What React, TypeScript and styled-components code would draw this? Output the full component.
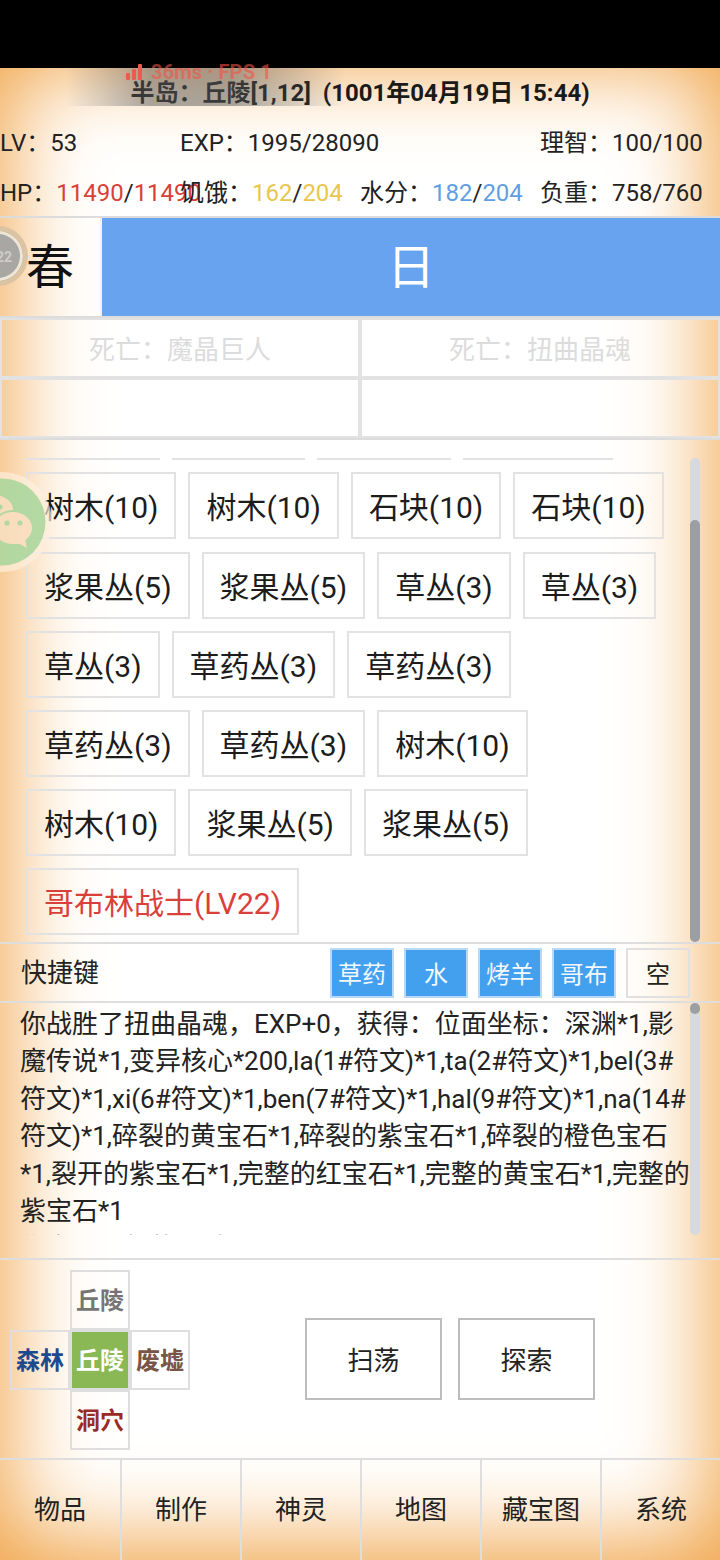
import React from "react";
import styled, { createGlobalStyle } from "styled-components";

const GlobalStyle = createGlobalStyle`
  html, body {
    margin: 0;
    padding: 0;
    background: #000;
  }
  * {
    box-sizing: border-box;
  }
`;

const Page = styled.div`
  position: relative;
  width: 720px;
  height: 1560px;
  overflow: hidden;
  background: #000;
  font-family: Roboto, "Noto Sans CJK SC", sans-serif;
  color: #1a1a1a;
`;

const StatusBar = styled.div`
  height: 68px;
  background: #000;
`;

const Game = styled.div`
  height: 1492px;
  background: #fff;
  box-shadow: inset 0 -10px 92px 6px #f0a040;
  display: flex;
  flex-direction: column;
`;

const Title = styled.div`
  height: 48px;
  font-size: 24px;
  font-weight: 700;
  line-height: 50px;
  text-align: center;
  white-space: pre;
`;

const Stats = styled.div`
  display: grid;
  grid-template-columns: repeat(4, 180px);
  grid-auto-rows: 50px;
  height: 100px;
  font-size: 24px;
  line-height: 54px;
  color: #222;
  white-space: nowrap;
`;

const Stat = styled.div<{ $span?: number }>`
  grid-column: span ${p => p.$span || 1};
  min-width: 0;
`;

const Num = styled.span<{ $color: string }>`
  color: ${p => p.$color};
`;

const SeasonRow = styled.div`
  display: flex;
  height: 102px;
  border-top: 2px solid #dcdcdc;
  border-bottom: 2px solid #dcdcdc;
`;

const Season = styled.div`
  width: 102px;
  padding-left: 26px;
  border-right: 2px solid #f2f2f2;
  color: #111;
`;

const DayPart = styled.div`
  flex: 1;
  background: #68a3ef;
  color: #fff;
  text-align: center;
`;

// the game cuts these two glyphs off at the foot of their box
const SeasonGlyph = styled.span`
  display: block;
  height: 70px;
  overflow: hidden;
  font-size: 48px;
  line-height: 100px;
`;

const EventGrid = styled.div`
  display: grid;
  grid-template-columns: 1fr 1fr;
  grid-auto-rows: 60px;
  height: 122px;
  border-bottom: 2px solid #dcdcdc;
`;

const EventCell = styled.div`
  border: 2px solid #e2e2e2;
  font-size: 26px;
  line-height: 60px;
  text-align: center;
  color: #dcdcdc;
`;

const ScrollArea = styled.div`
  position: relative;
  height: 502px;
  padding: 18px 56px 0 26px;
`;

const ScrollClip = styled.div`
  height: 484px;
  overflow: hidden;
`;

const ButtonRows = styled.div`
  display: flex;
  flex-direction: column;
  gap: 12.2px;
  margin-top: -64.8px;
`;

const ButtonRow = styled.div`
  display: flex;
  gap: 12px;
`;

const ResourceButton = styled.div<{ $enemy?: boolean }>`
  height: 67px;
  padding: 0 16px;
  border: 2px solid #e2e2e2;
  font-size: 30px;
  line-height: 68px;
  white-space: nowrap;
  color: ${p => (p.$enemy ? "#d9403a" : "#1c1c1c")};
`;

const Scrollbar = styled.div<{ $top: number; $bottom: number }>`
  position: absolute;
  top: ${p => p.$top}px;
  bottom: ${p => p.$bottom}px;
  right: 20px;
  width: 10px;
  border-radius: 5px;
  background: #d6d9de;
`;

const Thumb = styled.div<{ $top: number; $height: number }>`
  position: absolute;
  left: 0;
  right: 0;
  top: ${p => p.$top}px;
  height: ${p => p.$height}px;
  border-radius: 5px;
  background: #9b9ea3;
`;

const ShortcutRow = styled.div`
  display: flex;
  align-items: center;
  gap: 10px;
  height: 61px;
  padding: 0 30px 0 21px;
  border-top: 2px solid #dedede;
  border-bottom: 2px solid #dedede;
`;

const ShortcutLabel = styled.div`
  flex: 1;
  padding-bottom: 5px;
  font-size: 26px;
  color: #222;
`;

const ShortcutButton = styled.div<{ $active?: boolean }>`
  width: 64px;
  height: 50px;
  border: 2px solid ${p => (p.$active ? "#b9d9f5" : "#e0e0e0")};
  background: ${p => (p.$active ? "#42a0ee" : "transparent")};
  color: ${p => (p.$active ? "#f2f8fe" : "#222")};
  font-size: 24px;
  line-height: 50px;
  text-align: center;
`;

const LogPane = styled.div`
  position: relative;
  height: 257px;
  border-bottom: 2px solid #dedede;
`;

const LogText = styled.div`
  height: 232px;
  width: 690px;
  padding: 3px 0 0 20px;
  overflow: hidden;
  font-size: 26px;
  line-height: 37.4px;
  color: #222;
`;

const ActionArea = styled.div`
  display: flex;
  align-items: center;
  height: 198px;
  padding-left: 10px;
`;

const MapPad = styled.div`
  display: grid;
  grid-template-columns: repeat(3, 60px);
  grid-template-rows: repeat(3, 60px);
  margin-top: 2px;
`;

const MapCell = styled.div<{ $col: number; $row: number; $color: string; $active?: boolean }>`
  grid-column: ${p => p.$col};
  grid-row: ${p => p.$row};
  border: 2px solid #dedede;
  background: ${p => (p.$active ? "#8ab854" : "transparent")};
  color: ${p => p.$color};
  font-size: 24px;
  font-weight: 700;
  line-height: 58px;
  text-align: center;
`;

const Actions = styled.div`
  display: flex;
  gap: 16px;
  margin-left: 115px;
`;

const ActionButton = styled.div`
  width: 137px;
  height: 82px;
  border: 2px solid #bdbdbd;
  font-size: 26px;
  line-height: 82px;
  text-align: center;
  color: #222;
`;

const Tabs = styled.div`
  display: grid;
  grid-template-columns: repeat(6, 1fr);
  height: 102px;
  border-top: 2px solid #dedede;
`;

const Tab = styled.div`
  border-left: 2px solid #dedede;
  font-size: 26px;
  line-height: 100px;
  text-align: center;
  color: #222;

  &:first-child {
    border-left: 0;
  }
`;

const FpsBand = styled.div`
  position: absolute;
  top: 68px;
  left: 66px;
  width: 280px;
  height: 38px;
  background: linear-gradient(90deg, rgba(90, 90, 90, 0), rgba(90, 90, 90, 0.5) 30%, rgba(90, 90, 90, 0.5) 60%, rgba(90, 90, 90, 0));
`;

const FpsText = styled.div`
  position: absolute;
  top: 61px;
  left: 126px;
  display: flex;
  align-items: center;
  gap: 7px;
  height: 22px;
  font-size: 20.3px;
  font-weight: 700;
  color: rgba(240, 84, 72, 0.62);
  white-space: pre;
`;

const Avatar = styled.div`
  position: absolute;
  top: 226px;
  left: -32px;
  width: 60px;
  height: 60px;
  border: 5px solid #dcc4a2;
  border-radius: 50%;
  background: #a9a7a3;
  box-shadow: inset 0 0 0 3px #efe6d8;
  color: #cfcdc9;
  font-size: 14px;
  font-weight: 700;
  line-height: 52px;
  text-align: right;
  padding-right: 11px;
`;

const ChatBubble = styled.div`
  position: absolute;
  top: 472px;
  left: -48px;
  width: 100px;
  height: 100px;
  border-radius: 50%;
  background: rgba(255, 240, 222, 0.72);
  display: flex;
  opacity: 0.92;
`;

const items = [
  ["草丛(3)", "草丛(3)", "草丛(3)", "树木(10)"],
  ["树木(10)", "树木(10)", "石块(10)", "石块(10)"],
  ["浆果丛(5)", "浆果丛(5)", "草丛(3)", "草丛(3)"],
  ["草丛(3)", "草药丛(3)", "草药丛(3)"],
  ["草药丛(3)", "草药丛(3)", "树木(10)"],
  ["树木(10)", "浆果丛(5)", "浆果丛(5)"]
];

const mapCells = [
  { col: 2, row: 1, label: "丘陵", color: "#757575" },
  { col: 1, row: 2, label: "森林", color: "#1c4a8c" },
  { col: 2, row: 2, label: "丘陵", color: "#fff", active: true },
  { col: 3, row: 2, label: "废墟", color: "#795548" },
  { col: 2, row: 3, label: "洞穴", color: "#9a2a26" }
];

const logText =
  "你战胜了扭曲晶魂，EXP+0，获得：位面坐标：深渊*1,影魔传说*1,变异核心*200,la(1#符文)*1,ta(2#符文)*1,bel(3#符文)*1,xi(6#符文)*1,ben(7#符文)*1,hal(9#符文)*1,na(14#符文)*1,碎裂的黄宝石*1,碎裂的紫宝石*1,碎裂的橙色宝石*1,裂开的紫宝石*1,完整的红宝石*1,完整的黄宝石*1,完整的紫宝石*1";

export default function App() {
  return (
    <Page>
      <GlobalStyle />
      <StatusBar />
      <Game>
        <Title>半岛：丘陵[1,12]  (1001年04月19日 15:44)</Title>
        <Stats>
          <Stat>LV：53</Stat>
          <Stat $span={2}>EXP：1995/28090</Stat>
          <Stat>理智：100/100</Stat>
          <Stat>
            HP：<Num $color="#d9403a">11490</Num>/<Num $color="#d9403a">11490</Num>
          </Stat>
          <Stat>
            饥饿：<Num $color="#e8c64f">162</Num>/<Num $color="#e8c64f">204</Num>
          </Stat>
          <Stat>
            水分：<Num $color="#5f9fe3">182</Num>/<Num $color="#5f9fe3">204</Num>
          </Stat>
          <Stat>负重：758/760</Stat>
        </Stats>
        <SeasonRow>
          <Season>
            <SeasonGlyph>春</SeasonGlyph>
          </Season>
          <DayPart>
            <SeasonGlyph>日</SeasonGlyph>
          </DayPart>
        </SeasonRow>
        <EventGrid>
          <EventCell>死亡：魔晶巨人</EventCell>
          <EventCell>死亡：扭曲晶魂</EventCell>
          <EventCell />
          <EventCell />
        </EventGrid>
        <ScrollArea>
          <ScrollClip>
            <ButtonRows>
              {items.map((row, i) => (
                <ButtonRow key={i}>
                  {row.map((label, j) => (
                    <ResourceButton key={j}>{label}</ResourceButton>
                  ))}
                </ButtonRow>
              ))}
              <ButtonRow>
                <ResourceButton $enemy>哥布林战士(LV22)</ResourceButton>
              </ButtonRow>
            </ButtonRows>
          </ScrollClip>
          <Scrollbar $top={18} $bottom={0}>
            <Thumb $top={62} $height={422} />
          </Scrollbar>
        </ScrollArea>
        <ShortcutRow>
          <ShortcutLabel>快捷键</ShortcutLabel>
          <ShortcutButton $active>草药</ShortcutButton>
          <ShortcutButton $active>水</ShortcutButton>
          <ShortcutButton $active>烤羊</ShortcutButton>
          <ShortcutButton $active>哥布</ShortcutButton>
          <ShortcutButton>空</ShortcutButton>
        </ShortcutRow>
        <LogPane>
          <LogText>
            {logText}
            <br />
            你发现了新的区域
          </LogText>
          <Scrollbar $top={0} $bottom={23}>
            <Thumb $top={0} $height={11} />
          </Scrollbar>
        </LogPane>
        <ActionArea>
          <MapPad>
            {mapCells.map(c => (
              <MapCell key={`${c.col}-${c.row}`} $col={c.col} $row={c.row} $color={c.color} $active={c.active}>
                {c.label}
              </MapCell>
            ))}
          </MapPad>
          <Actions>
            <ActionButton>扫荡</ActionButton>
            <ActionButton>探索</ActionButton>
          </Actions>
        </ActionArea>
        <Tabs>
          {["物品", "制作", "神灵", "地图", "藏宝图", "系统"].map(t => (
            <Tab key={t}>{t}</Tab>
          ))}
        </Tabs>
      </Game>
      <FpsBand />
      <FpsText>
        <svg width="18" height="16" viewBox="0 0 18 16">
          <rect x="0" y="9" width="4" height="7" rx="1" fill="#ee5a50" />
          <rect x="6" y="5" width="4" height="11" rx="1" fill="#ee5a50" />
          <rect x="12" y="0" width="4" height="16" rx="1" fill="#ee5a50" />
        </svg>
        36ms · FPS 1
      </FpsText>
      <Avatar>22</Avatar>
      <ChatBubble>
        <svg width="100" height="100" viewBox="0 0 100 100">
          <circle cx="50" cy="50" r="43.5" fill="#aed8a0" />
          <ellipse cx="42" cy="38" rx="19" ry="15" fill="#f9dfc0" />
          <circle cx="48" cy="35" r="2.6" fill="#aed8a0" />
          <path
            d="M61 39c11 0 20 7.600 20 17 0 5-2.500 9.500-6.500 12.600L76 78l-8.500-5.200c-2 .5-4.300 .2-6.500 .2-11 0-20-7.600-20-17s9-17 20-17z"
            fill="#f9dfc0"
            stroke="#aed8a0"
            strokeWidth="2"
          />
          <circle cx="55" cy="51" r="2.6" fill="#aed8a0" />
          <circle cx="68" cy="51" r="2.6" fill="#aed8a0" />
        </svg>
      </ChatBubble>
    </Page>
  );
}
